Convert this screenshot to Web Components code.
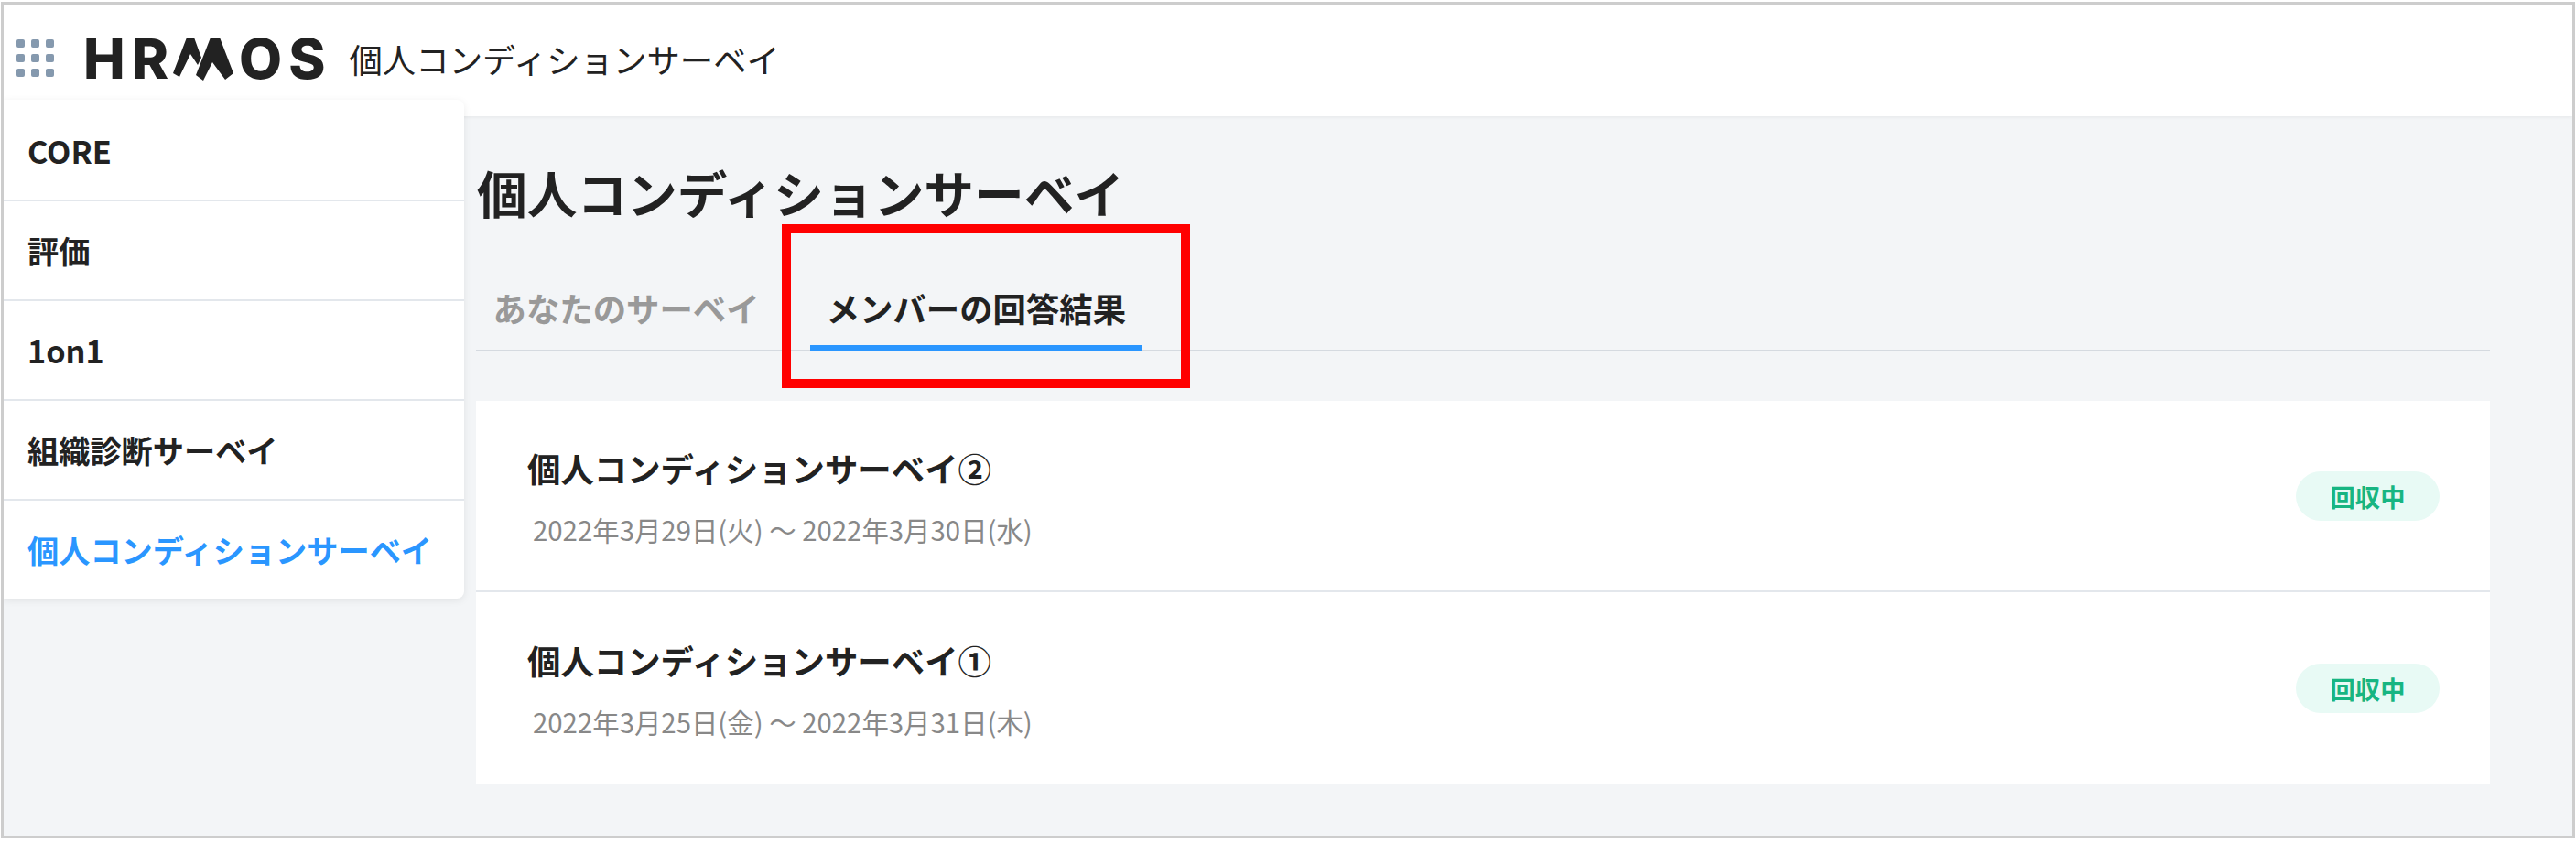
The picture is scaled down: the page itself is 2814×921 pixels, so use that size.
<!DOCTYPE html>
<html lang="ja">
<head>
<meta charset="utf-8">
<title>個人コンディションサーベイ</title>
<style>
  html, body { margin: 0; height: 100%; background: #fff; }
  body {
    font-family: "Noto Sans CJK JP", "Noto Sans", sans-serif;
    color: #222;
  }
</style>
</head>
<body>
<hr-app>
  <hr-header slot="header">個人コンディションサーベイ</hr-header>
  <hr-sidebar slot="sidebar">
    <hr-side-item>CORE</hr-side-item>
    <hr-side-item>評価</hr-side-item>
    <hr-side-item>1on1</hr-side-item>
    <hr-side-item>組織診断サーベイ</hr-side-item>
    <hr-side-item active>個人コンディションサーベイ</hr-side-item>
  </hr-sidebar>
  <hr-page-title>個人コンディションサーベイ</hr-page-title>
  <hr-tabs>
    <hr-tab>あなたのサーベイ</hr-tab>
    <hr-tab active>メンバーの回答結果</hr-tab>
  </hr-tabs>
  <hr-survey-list>
    <hr-survey-row dates="2022年3月29日(火) 〜 2022年3月30日(水)">個人コンディションサーベイ②</hr-survey-row>
    <hr-survey-row dates="2022年3月25日(金) 〜 2022年3月31日(木)">個人コンディションサーベイ①</hr-survey-row>
  </hr-survey-list>
</hr-app>

<script>
// Small helper so every element below is just a class name, a style and markup
const defineEl = (name, html, extend) => {
  const template = document.createElement('template');
  template.innerHTML = html;
  class El extends HTMLElement {
    constructor() {
      super();
      this.attachShadow({ mode: 'open' });
      this.shadowRoot.appendChild(template.content.cloneNode(true));
    }
    connectedCallback() {
      if (extend) extend(this);
    }
  }
  customElements.define(name, El);
};

defineEl('hr-app', `
  <style>
    :host {
      display: flex;
      flex-direction: column;
      box-sizing: border-box;
      height: 914px;
      margin: 2px 1px 0 1px;
      border: 3px solid #cdcdcd;
      background: #f3f5f7;
      position: relative;
      overflow: hidden;
    }
    .body { display: flex; flex: 1; }
    main { flex: 1; padding: 0 90px 0 13px; min-width: 0; }
    /* annotation drawn over the screenshot */
    .mark {
      position: absolute;
      left: 850px;
      top: 240px;
      width: 446px;
      height: 179px;
      box-sizing: border-box;
      border: 10px solid #f00;
    }
  </style>
  <slot name="header"></slot>
  <div class="body">
    <slot name="sidebar"></slot>
    <main><slot></slot></main>
  </div>
  <div class="mark"></div>
`);

defineEl('hr-header', `
  <style>
    :host {
      display: flex;
      align-items: center;
      height: 122px;
      padding: 0 0 5px 14px;
      box-sizing: border-box;
      background: #fff;
      box-shadow: 0 1px 4px rgba(0, 0, 0, .06);
      position: relative;
    }
    .apps {
      display: grid;
      grid-template-columns: repeat(3, 9px);
      grid-auto-rows: 9px;
      gap: 7px;
    }
    .apps i { background: #8599ae; border-radius: 2px; }
    .logo {
      display: flex;
      align-items: center;
      margin: 2px 0 0 32px;
      font: 800 61px/47px "Inter", sans-serif;
      color: #222;
      letter-spacing: 7px;
      height: 47px;
    }
    .logo svg { display: block; margin: 0 6px 0 -2px; }
    .name {
      margin: 1px 0 0 19px;
      font-size: 36.4px;
      line-height: 54px;
      font-weight: 400;
      color: #222;
    }
  </style>
  <div class="apps"><i></i><i></i><i></i><i></i><i></i><i></i><i></i><i></i><i></i></div>
  <div class="logo">HR<svg width="66" height="47" viewBox="0 0 66 47"><path fill="#222" d="M0 39 L7 43 L19 18 L27 30 L31 22 L23 0 H15 Z M25 41 L33 47 L43 27 L57 46 L66 39 L51 0 H41 Z"/></svg>OS</div>
  <div class="name"><slot></slot></div>
`);

defineEl('hr-sidebar', `
  <style>
    :host {
      display: block;
      box-sizing: border-box;
      flex: none;
      width: 503px;
      height: 545px;
      margin-top: -18px;
      padding-top: 2px;
      background: #fff;
      border-radius: 0 8px 8px 0;
      box-shadow: 0 2px 8px rgba(0, 0, 0, .08);
      position: relative;
    }
  </style>
  <slot></slot>
`);

defineEl('hr-side-item', `
  <style>
    :host {
      display: flex;
      align-items: center;
      box-sizing: border-box;
      height: 109px;
      padding: 0 0 2px 26px;
      border-bottom: 2px solid #e3e7ec;
      font-size: 34.2px;
      font-weight: 700;
      color: #222;
    }
    :host(:last-child) { border-bottom: 0; height: 106px; padding-bottom: 0; }
    :host([active]) { color: #2a96ff; }
  </style>
  <slot></slot>
`);

defineEl('hr-page-title', `
  <style>
    :host {
      display: block;
      padding: 43px 0 0 1px;
      font-size: 54.7px;
      line-height: 80px;
      font-weight: 700;
      color: #222;
    }
  </style>
  <slot></slot>
`);

defineEl('hr-tabs', `
  <style>
    :host {
      display: flex;
      gap: 38px;
      box-sizing: border-box;
      height: 134px;
      padding-left: 1px;
      align-items: flex-end;
      border-bottom: 2px solid #d5dae0;
    }
  </style>
  <slot></slot>
`);

defineEl('hr-tab', `
  <style>
    :host {
      display: block;
      box-sizing: border-box;
      padding: 0 17.500px 14px;
      margin-bottom: -2px;
      font-size: 36.4px;
      line-height: 54px;
      font-weight: 700;
      color: #999;
      border-bottom: 7px solid transparent;
    }
    :host([active]) { color: #222; border-bottom-color: #2a96ff; }
  </style>
  <slot></slot>
`);

defineEl('hr-survey-list', `
  <style>
    :host { display: block; margin-top: 54px; background: #fff; }
  </style>
  <slot></slot>
`);

defineEl('hr-survey-row', `
  <style>
    :host {
      display: flex;
      align-items: center;
      justify-content: space-between;
      box-sizing: border-box;
      height: 209px;
      padding: 0 55px 0 56px;
      border-bottom: 2px solid #e3e7ec;
    }
    :host(:last-child) { border-bottom: 0; }
    .name { font-size: 36.4px; line-height: 54px; font-weight: 700; color: #222; }
    .dates {
      margin: 19px 0 0 6px;
      font-size: 29.4px;
      line-height: 42px;
      font-weight: 400;
      color: #888;
    }
    .badge {
      width: 157px;
      height: 54px;
      border-radius: 27px;
      background: #e8faf5;
      color: #17b582;
      font-size: 27.3px;
      font-weight: 700;
      line-height: 54px;
      text-align: center;
    }
  </style>
  <div class="text">
    <div class="name"><slot></slot></div>
    <div class="dates"></div>
  </div>
  <div class="badge">回収中</div>
`, (el) => {
  el.shadowRoot.querySelector('.dates').textContent = el.getAttribute('dates');
});
</script>
</body>
</html>
